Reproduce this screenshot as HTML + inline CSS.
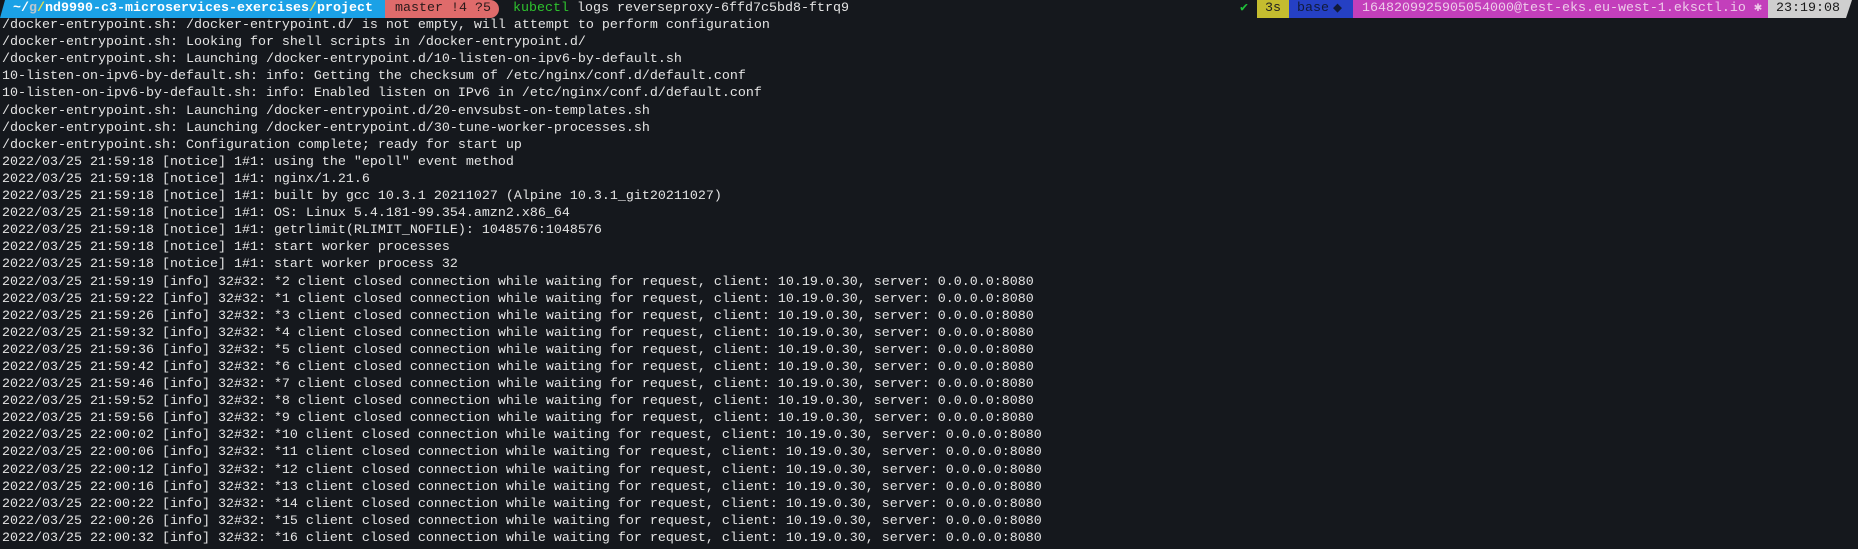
<!DOCTYPE html>
<html><head><meta charset="utf-8"><style>
html,body{margin:0;padding:0;background:#15181d;width:1858px;height:549px;overflow:hidden}
body{font-family:"Liberation Mono",monospace;font-size:13.33px;line-height:17.1px;color:#e4e4e4;position:relative}
#log{position:absolute;left:2px;top:0;white-space:pre}
.seg{position:absolute;top:0;height:18px;line-height:18px;white-space:pre}
</style></head><body>
<div class="seg" style="left:0;width:385px;background:#1ba1e6;clip-path:polygon(5px 0,100% 0,100% 100%,0 100%);color:#fff;font-weight:bold;padding-left:0"><span style="position:absolute;left:13px">~/<span style="color:#b9c6d0">g</span><span style="color:#e8e04a">/</span>nd9990-c3-microservices-exercises<span style="color:#e8e04a">/</span>project</span></div>
<div class="seg" style="left:385px;width:114px;background:#df6b6b;border-radius:0 9px 9px 0;color:#2a1a1a"><span style="position:absolute;left:10px">master !4 ?5</span></div>
<div class="seg" style="left:513px;color:#e4e4e4"><span style="color:#2ec22e">kubectl</span> logs reverseproxy-6ffd7c5bd8-ftrq9</div>
<div class="seg" style="left:1240px;color:#1fc23a">✔</div>
<div class="seg" style="left:1257px;width:32px;background:#c4bc2f;color:#222;text-align:center">3s</div>
<div class="seg" style="left:1289px;width:64px;background:#2540c4;color:#111a3a"><span style="position:absolute;left:8px">base</span><span style="position:absolute;left:44px;font-size:15px">◆</span></div>
<div class="seg" style="left:1353px;width:415px;background:#c33fbb;color:#eecbea;padding-left:9px;box-sizing:border-box">1648209925905054000@test-eks.eu-west-1.eksctl.io ✱</div>
<div class="seg" style="left:1768px;width:84px;background:#cfcfcf;color:#1a1a1a;clip-path:polygon(0 0,100% 0,calc(100% - 6px) 100%,0 100%);padding-left:8px;box-sizing:border-box">23:19:08</div>
<div id="log">
/docker-entrypoint.sh: /docker-entrypoint.d/ is not empty, will attempt to perform configuration
/docker-entrypoint.sh: Looking for shell scripts in /docker-entrypoint.d/
/docker-entrypoint.sh: Launching /docker-entrypoint.d/10-listen-on-ipv6-by-default.sh
10-listen-on-ipv6-by-default.sh: info: Getting the checksum of /etc/nginx/conf.d/default.conf
10-listen-on-ipv6-by-default.sh: info: Enabled listen on IPv6 in /etc/nginx/conf.d/default.conf
/docker-entrypoint.sh: Launching /docker-entrypoint.d/20-envsubst-on-templates.sh
/docker-entrypoint.sh: Launching /docker-entrypoint.d/30-tune-worker-processes.sh
/docker-entrypoint.sh: Configuration complete; ready for start up
2022/03/25 21:59:18 [notice] 1#1: using the "epoll" event method
2022/03/25 21:59:18 [notice] 1#1: nginx/1.21.6
2022/03/25 21:59:18 [notice] 1#1: built by gcc 10.3.1 20211027 (Alpine 10.3.1_git20211027)
2022/03/25 21:59:18 [notice] 1#1: OS: Linux 5.4.181-99.354.amzn2.x86_64
2022/03/25 21:59:18 [notice] 1#1: getrlimit(RLIMIT_NOFILE): 1048576:1048576
2022/03/25 21:59:18 [notice] 1#1: start worker processes
2022/03/25 21:59:18 [notice] 1#1: start worker process 32
2022/03/25 21:59:19 [info] 32#32: *2 client closed connection while waiting for request, client: 10.19.0.30, server: 0.0.0.0:8080
2022/03/25 21:59:22 [info] 32#32: *1 client closed connection while waiting for request, client: 10.19.0.30, server: 0.0.0.0:8080
2022/03/25 21:59:26 [info] 32#32: *3 client closed connection while waiting for request, client: 10.19.0.30, server: 0.0.0.0:8080
2022/03/25 21:59:32 [info] 32#32: *4 client closed connection while waiting for request, client: 10.19.0.30, server: 0.0.0.0:8080
2022/03/25 21:59:36 [info] 32#32: *5 client closed connection while waiting for request, client: 10.19.0.30, server: 0.0.0.0:8080
2022/03/25 21:59:42 [info] 32#32: *6 client closed connection while waiting for request, client: 10.19.0.30, server: 0.0.0.0:8080
2022/03/25 21:59:46 [info] 32#32: *7 client closed connection while waiting for request, client: 10.19.0.30, server: 0.0.0.0:8080
2022/03/25 21:59:52 [info] 32#32: *8 client closed connection while waiting for request, client: 10.19.0.30, server: 0.0.0.0:8080
2022/03/25 21:59:56 [info] 32#32: *9 client closed connection while waiting for request, client: 10.19.0.30, server: 0.0.0.0:8080
2022/03/25 22:00:02 [info] 32#32: *10 client closed connection while waiting for request, client: 10.19.0.30, server: 0.0.0.0:8080
2022/03/25 22:00:06 [info] 32#32: *11 client closed connection while waiting for request, client: 10.19.0.30, server: 0.0.0.0:8080
2022/03/25 22:00:12 [info] 32#32: *12 client closed connection while waiting for request, client: 10.19.0.30, server: 0.0.0.0:8080
2022/03/25 22:00:16 [info] 32#32: *13 client closed connection while waiting for request, client: 10.19.0.30, server: 0.0.0.0:8080
2022/03/25 22:00:22 [info] 32#32: *14 client closed connection while waiting for request, client: 10.19.0.30, server: 0.0.0.0:8080
2022/03/25 22:00:26 [info] 32#32: *15 client closed connection while waiting for request, client: 10.19.0.30, server: 0.0.0.0:8080
2022/03/25 22:00:32 [info] 32#32: *16 client closed connection while waiting for request, client: 10.19.0.30, server: 0.0.0.0:8080</div>
</body></html>
